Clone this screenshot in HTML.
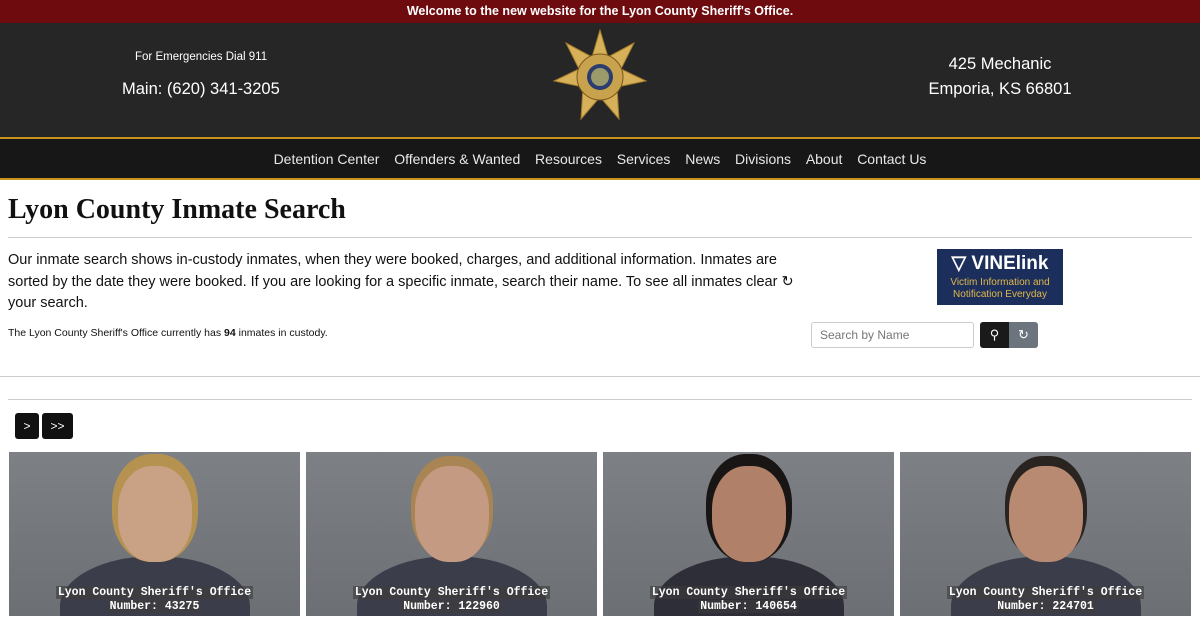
<!DOCTYPE html>
<html><head><meta charset="utf-8"><style>
*{box-sizing:border-box;margin:0;padding:0}
body{width:1200px;height:620px;overflow:hidden;font-family:"Liberation Sans",sans-serif;background:#fff;color:#111}
.top{height:23px;background:#6e0b0e;color:#fff;font-weight:bold;font-size:12.5px;text-align:center;line-height:23px}
.hdr{height:116px;background:#262626;border-bottom:2px solid #c8941e;position:relative;color:#fff}
.nav{height:41px;background:#171717;border-bottom:2px solid #c8941e;text-align:center;font-size:14px;color:#e8e8e8;line-height:40px;white-space:nowrap}
.nav span{margin:0 7.4px}
h1{font-family:"Liberation Serif",serif;font-size:28px;position:absolute;left:8px;top:194px}
.hr{position:absolute;left:8px;right:8px;height:1px;background:#ccc}
.card{position:absolute;top:452px;width:291px;height:164px;background:linear-gradient(#7d8085,#6c6f74);overflow:hidden}
.face{position:absolute;left:50%;top:14px;width:74px;height:96px;margin-left:-37px;border-radius:45%;background:#c49a82}
.body{position:absolute;left:50%;bottom:-40px;width:190px;height:100px;margin-left:-95px;border-radius:50% 50% 0 0;background:#3c3d4a}
.cap{position:absolute;left:0;right:0;bottom:2px;text-align:center;font-family:"Liberation Mono",monospace;font-weight:bold;font-size:11.5px;color:#fff;line-height:14px}
.cap span{background:rgba(60,60,60,.6);padding:0 2px}
</style></head><body>
<div class="top">Welcome to the new website for the Lyon County Sheriff's Office.</div>
<div class="hdr">
<div style="position:absolute;left:135px;top:28px;font-size:11.5px">For Emergencies Dial 911</div>
<div style="position:absolute;left:122px;top:57px;font-size:16.5px">Main: (620) 341-3205</div>
<svg style="position:absolute;left:553px;top:6px" width="94" height="94" viewBox="0 0 94 94"><polygon points="47,1 55,28 81,14 68,40 93,52 64,58 66,90 47,68 28,90 30,58 1,52 26,40 13,14 39,28" fill="#d7b05a" stroke="#a27c2a"/><circle cx="47" cy="48" r="23" fill="#c9a24d" stroke="#7a5a1c"/><circle cx="47" cy="48" r="13" fill="#2b3d6e"/><circle cx="47" cy="48" r="9" fill="#9a9a6a"/></svg>
<div style="position:absolute;left:900px;top:29px;font-size:16.5px;text-align:center;width:200px;line-height:25px">425 Mechanic<br>Emporia, KS 66801</div>
</div>
<div class="nav"><span>Detention Center</span><span>Offenders &amp; Wanted</span><span>Resources</span><span>Services</span><span>News</span><span>Divisions</span><span>About</span><span>Contact Us</span></div>
<h1>Lyon County Inmate Search</h1>
<div class="hr" style="top:237px"></div>
<div style="position:absolute;left:8px;top:250px;width:790px;font-size:14.5px;line-height:21.5px">Our inmate search shows in-custody inmates, when they were booked, charges, and additional information. Inmates are<br>sorted by the date they were booked. If you are looking for a specific inmate, search their name. To see all inmates clear &#x21bb;<br>your search.</div>
<div style="position:absolute;left:8px;top:327px;font-size:10.5px">The Lyon County Sheriff's Office currently has <b>94</b> inmates in custody.</div>
<div style="position:absolute;left:937px;top:249px;width:126px;height:56px;background:#1c2f5c;color:#e1b74a;text-align:center;font-size:10px;line-height:12px"><div style="color:#fff;font-size:19px;font-weight:bold;line-height:26px;padding-top:2px">&#x25BD; VINElink</div>Victim Information and<br>Notification Everyday</div>
<div style="position:absolute;left:811px;top:322px;width:163px;height:26px;border:1px solid #ccc;border-radius:3px;font-size:12px;color:#777;padding:5px 8px">Search by Name</div>
<div style="position:absolute;left:980px;top:322px;width:29px;height:26px;background:#1a1a1a;border-radius:3px 0 0 3px;color:#fff;font-size:13px;text-align:center;line-height:26px">&#x26B2;</div>
<div style="position:absolute;left:1009px;top:322px;width:29px;height:26px;background:#6c757d;border-radius:0 3px 3px 0;color:#fff;font-size:13px;text-align:center;line-height:26px">&#x21bb;</div>
<div class="hr" style="top:376px;left:0;right:0"></div>
<div class="hr" style="top:399px"></div>
<div style="position:absolute;left:15px;top:413px;width:24px;height:26px;background:#111;color:#fff;border-radius:3px;font-size:12px;text-align:center;line-height:26px">&gt;</div>
<div style="position:absolute;left:42px;top:413px;width:31px;height:26px;background:#111;color:#fff;border-radius:3px;font-size:12px;text-align:center;line-height:26px">&gt;&gt;</div>
<div class="card" style="left:9px"><div class="body"></div><div class="face" style="background:#c9a185;box-shadow:0 -6px 0 6px #b59250"></div><div class="cap"><span>Lyon County Sheriff's Office</span><br><span>Number: 43275</span></div></div>
<div class="card" style="left:306px"><div class="body"></div><div class="face" style="box-shadow:0 -6px 0 4px #a88552"></div><div class="cap"><span>Lyon County Sheriff's Office</span><br><span>Number: 122960</span></div></div>
<div class="card" style="left:603px"><div class="body" style="background:#2e2e38"></div><div class="face" style="background:#b08068;box-shadow:0 -6px 0 6px #1a1515"></div><div class="cap"><span>Lyon County Sheriff's Office</span><br><span>Number: 140654</span></div></div>
<div class="card" style="left:900px"><div class="body"></div><div class="face" style="background:#b88a72;box-shadow:0 -6px 0 4px #2a2420"></div><div class="cap"><span>Lyon County Sheriff's Office</span><br><span>Number: 224701</span></div></div>
</body></html>
